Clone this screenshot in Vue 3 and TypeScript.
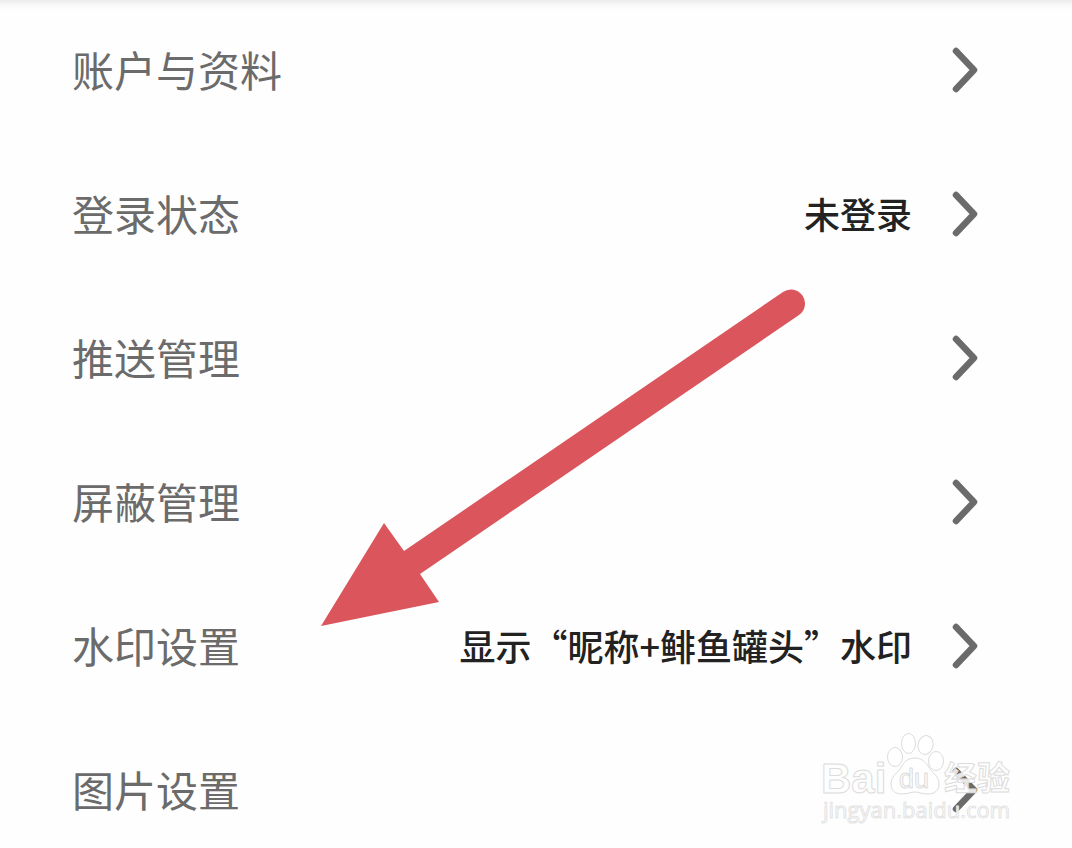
<script setup lang="ts">
interface SettingItem {
  id: string
  label: string
  value?: string
}

const items: SettingItem[] = [
  { id: 'account', label: '账户与资料' },
  { id: 'login', label: '登录状态', value: '未登录' },
  { id: 'push', label: '推送管理' },
  { id: 'block', label: '屏蔽管理' },
  { id: 'watermark', label: '水印设置', value: '显示“昵称+鲱鱼罐头”水印' },
  { id: 'image', label: '图片设置' },
]
</script>

<template>
  <main class="page">
    <ul class="list">
      <li v-for="item in items" :key="item.id">
        <button type="button" class="row">
          <span class="label">{{ item.label }}</span>
          <span v-if="item.value" class="value">{{ item.value }}</span>
          <svg class="chevron" viewBox="0 0 26 46" aria-hidden="true">
            <path d="M4 4 L22 23 L4 42" />
          </svg>
        </button>
      </li>
    </ul>

    <svg class="arrow" viewBox="0 0 486 340" aria-hidden="true">
      <path
        d="M1 338 L64 235 L84 263 L463 4 A14 14 0 0 1 479 27 L100 286 L119 314 Z"
      />
    </svg>

    <svg class="brand" viewBox="0 0 230 120" role="img" aria-label="Baidu 经验">
      <g class="mark">
        <text x="21" y="73" class="word">Bai</text>
        <ellipse cx="95" cy="37" rx="7.500" ry="9.500" />
        <ellipse cx="108.500" cy="23.500" rx="7" ry="10" />
        <ellipse cx="125.500" cy="25" rx="7.500" ry="9.500" transform="rotate(12 125.500 25)" />
        <ellipse cx="136" cy="41" rx="7.500" ry="9.500" />
        <path
          d="M115 38 C106 38 103 44 100 49 C96 54 91 57 91 64 C91 71 96 74 102 74 C108 74 111 72 115 72 C119 72 122 74 128 74 C135 74 139 70 139 64 C139 57 134 54 130 49 C127 44 123 38 115 38 Z"
        />
        <text x="99" y="68" class="du">du</text>
        <text x="144" y="70" class="cjk">经验</text>
        <text x="23" y="98" class="site">jingyan.baidu.com</text>
      </g>
    </svg>
  </main>
</template>

<style>
body {
  margin: 0;
  background: #fefefe;
}
</style>

<style scoped>
.page {
  position: relative;
  box-sizing: border-box;
  padding: 20px 94px 8px 72px;
  background: linear-gradient(#ebebeb, #f8f8f8 5px, #fefefe 10px);
  font-family: "Liberation Sans", "Noto Sans CJK SC", sans-serif;
}

.list {
  display: flex;
  flex-direction: column;
  gap: 44px;
  margin: 0;
  padding: 0;
  list-style: none;
}

.row {
  display: flex;
  align-items: center;
  width: 100%;
  height: 100px;
  padding: 0;
  border: 0;
  background: none;
  font-family: "Noto Sans CJK SC", sans-serif;
  text-align: left;
  cursor: pointer;
}

.label,
.value {
  padding-bottom: 2px;
}

.label {
  flex: 1;
  color: #6b6b6b;
  font-size: 42px;
  line-height: 60px;
}

.value {
  color: #222;
  font-size: 36px;
  font-weight: 500;
  line-height: 52px;
}

.chevron {
  width: 26px;
  height: 46px;
  margin-left: 40px;
  fill: none;
  stroke: #6b6b6b;
  stroke-width: 6.5;
  stroke-linecap: round;
  stroke-linejoin: round;
}

.arrow {
  position: absolute;
  top: 288px;
  left: 320px;
  width: 486px;
  height: 340px;
  fill: #da565c;
  pointer-events: none;
}

.brand {
  position: absolute;
  top: 720px;
  right: 42px;
  width: 230px;
  height: 120px;
  pointer-events: none;
}

.mark {
  fill: #fff;
  fill-opacity: 0.85;
  stroke: #dcdcdc;
  stroke-width: 1;
  stroke-linejoin: round;
  font-family: "Liberation Sans", "Noto Sans CJK SC", sans-serif;
}

.word {
  font-size: 42px;
  font-weight: 700;
}

.du {
  font-size: 27px;
}

.cjk {
  font-family: "Noto Sans CJK SC", sans-serif;
  font-size: 33px;
  font-weight: 700;
}

.site {
  stroke: #e4e4e4;
  font-family: "Open Sans", "Liberation Sans", sans-serif;
  font-size: 22px;
}
</style>
